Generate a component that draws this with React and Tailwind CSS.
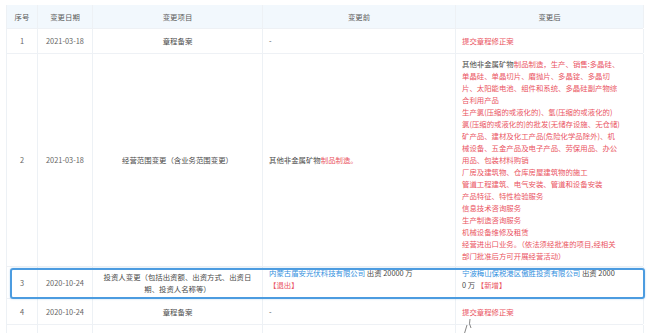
import React from "react";

const FONT = { fontFamily: '"Noto Sans CJK SC", "Noto Sans", sans-serif' };

// column widths: 序号 / 变更日期 / 变更项目 / 变更前 / 变更后
const ROW = "grid grid-cols-[31px_55px_170px_193px_188px] border-b border-[#eef1f5]";
const CELL = "flex items-center border-r border-[#edf1f5] px-[6px]";
const MID = `${CELL} justify-center text-center`;

const Red = ({ children }) => <span className="text-[#ea5462]">{children}</span>;
const Blue = ({ children }) => <span className="text-[#3391e0]">{children}</span>;

const scopeLines = [
  <>其他非金属矿物<Red>制品制造，生产、销售:多晶硅、</Red></>,
  <Red>单晶硅、单晶切片、磨抛片、多晶锭、多晶切</Red>,
  <Red>片、太阳能电池、组件和系统、多晶硅副产物综</Red>,
  <Red>合利用产品</Red>,
  <Red>生产氯(压缩的或液化的)、氢(压缩的或液化的)</Red>,
  <Red>氯(压缩的或液化的)的批发(无储存设施、无仓储)</Red>,
  <Red>矿产品、建材及化工产品(危险化学品除外)、机</Red>,
  <Red>械设备、五金产品及电子产品、劳保用品、办公</Red>,
  <Red>用品、包装材料购销</Red>,
  <Red>厂房及建筑物、仓库房屋建筑物的施工</Red>,
  <Red>管道工程建筑、电气安装、管道和设备安装</Red>,
  <Red>产品特征、特性检验服务</Red>,
  <Red>信息技术咨询服务</Red>,
  <Red>生产制造咨询服务</Red>,
  <Red>机械设备维修及租赁</Red>,
  <Red>经营进出口业务。（依法须经批准的项目,经相关</Red>,
  <Red>部门批准后方可开展经营活动）</Red>,
];

export default function App() {
  return (
    <div
      className="w-[656px] h-[333px] overflow-hidden bg-white pt-[5px] pl-[6px] text-[7.4px] leading-[12px] text-[#4a4a4a]"
      style={FONT}
    >
      <div className="w-[637px] border-l border-[#edf1f5]">
        {/* HEADER */}
        <div className={`${ROW} h-[24px] bg-[#f2f8fd] text-[#5a5a5a]`}>
          <div className={MID}>序号</div>
          <div className={MID}>变更日期</div>
          <div className={MID}>变更项目</div>
          <div className={MID}>变更前</div>
          <div className={MID}>变更后</div>
        </div>

        {/* ROW 1 */}
        <div className={`${ROW} h-[25px]`}>
          <div className={`${MID} text-[#666]`}>1</div>
          <div className={`${MID} text-[#666]`}>2021-03-18</div>
          <div className={MID}>章程备案</div>
          <div className={CELL}>-</div>
          <div className={CELL}><Red>提交章程修正案</Red></div>
        </div>

        {/* ROW 2 */}
        <div className={ROW}>
          <div className={`${MID} text-[#666]`}>2</div>
          <div className={`${MID} text-[#666]`}>2021-03-18</div>
          <div className={MID}>经营范围变更（含业务范围变更）</div>
          <div className={CELL}>
            <span>其他非金属矿物<Red>制品制造。</Red></span>
          </div>
          <div className={`${CELL} flex-col items-start py-[4px]`}>
            {scopeLines.map((line, i) => (
              <div key={i} className="whitespace-nowrap">{line}</div>
            ))}
          </div>
        </div>

        {/* ROW 3 (highlighted) */}
        <div className={`${ROW} h-[32px] relative`}>
          <div className={`${MID} text-[#666]`}>3</div>
          <div className={`${MID} text-[#666]`}>2020-10-24</div>
          <div className={`${MID} flex-col`}>
            <div className="whitespace-nowrap">投资人变更（包括出资额、出资方式、出资日</div>
            <div className="whitespace-nowrap">期、投资人名称等）</div>
          </div>
          <div className={`${CELL} flex-col items-start`}>
            <div className="whitespace-nowrap">
              <Blue>内蒙古盾安光伏科技有限公司</Blue> 出资 20000 万
            </div>
            <div><Red>【退出】</Red></div>
          </div>
          <div className={`${CELL} flex-col items-start`}>
            <div className="whitespace-nowrap">
              <Blue>宁波梅山保税港区傲胜投资有限公司</Blue> 出资 2000
            </div>
            <div className="whitespace-nowrap">0 万 <Red>【新增】</Red></div>
          </div>
          <div className="absolute top-[1px] -bottom-[1px] left-[3px] -right-[2px] border-2 border-[#4c9ce0] rounded-[3px] shadow-[0_0_2px_rgba(76,156,224,0.4)] pointer-events-none" />
        </div>

        {/* ROW 4 */}
        <div className={`${ROW} h-[26px]`}>
          <div className={`${MID} text-[#666]`}>4</div>
          <div className={`${MID} text-[#666]`}>2020-10-24</div>
          <div className={MID}>章程备案</div>
          <div className={CELL}>-</div>
          <div className={CELL}><Red>提交章程修正案</Red></div>
        </div>

        {/* ROW 5 (cut off) */}
        <div className={`${ROW} h-[20px] border-b-0`}>
          <div className={CELL} />
          <div className={CELL} />
          <div className={CELL} />
          <div className={CELL} />
          <div className={`${CELL} items-start`}>
            <svg width="14" height="16" viewBox="0 0 14 16" fill="none" className="-mt-[6px]">
              <path d="M2 16 L5 6" stroke="#666" strokeWidth="0.8" />
              <path d="M8 0 Q6.5 5 9 9" stroke="#666" strokeWidth="0.8" />
            </svg>
          </div>
        </div>
      </div>
    </div>
  );
}
